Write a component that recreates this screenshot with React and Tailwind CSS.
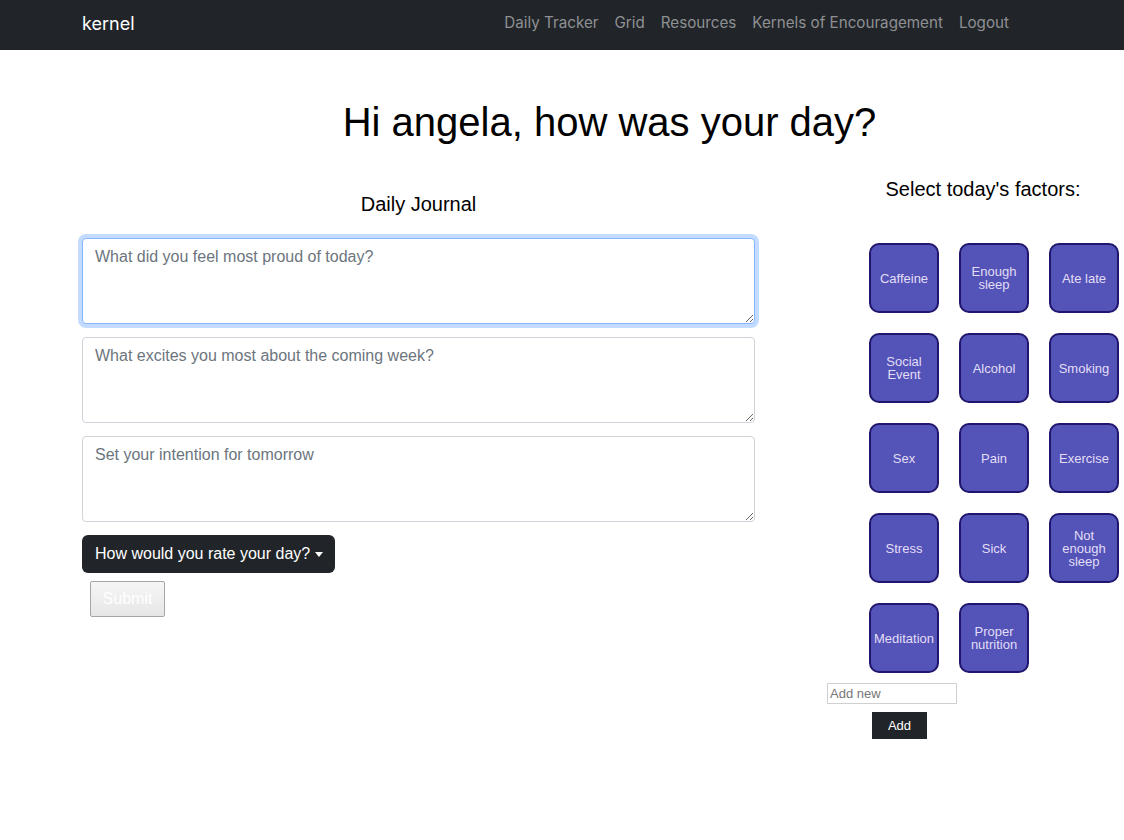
import React from "react";

const factors = [
  "Caffeine",
  "Enough sleep",
  "Ate late",
  "Social Event",
  "Alcohol",
  "Smoking",
  "Sex",
  "Pain",
  "Exercise",
  "Stress",
  "Sick",
  "Not enough sleep",
  "Meditation",
  "Proper nutrition",
];

const prompts = [
  "What did you feel most proud of today?",
  "What excites you most about the coming week?",
  "Set your intention for tomorrow",
];

export default function App() {
  return (
    <div className="min-h-[840px] bg-white font-['Liberation_Sans',Arial,sans-serif] text-black overflow-hidden">
      <nav className="h-[50px] bg-[#212529] flex items-center pb-[3px] pl-[82px] pr-[115px] font-['Inter',sans-serif]">
        <span className="text-[18px] text-white leading-none">kernel</span>
        <div className="ml-auto flex items-center gap-4 text-[15.2px] text-[#8f9093]">
          <span>Daily Tracker</span>
          <span>Grid</span>
          <span>Resources</span>
          <span>Kernels of Encouragement</span>
          <span>Logout</span>
        </div>
      </nav>

      <h1 className="mt-[48px] pl-[95px] text-center text-[40px] leading-[48px] font-normal">
        Hi angela, how was your day?
      </h1>

      <div className="flex pl-[82px]">
        <div className="w-[673px] shrink-0 pt-[46px]">
          <h2 className="text-center text-[20px] leading-[24px]">Daily Journal</h2>
          <div className="mt-[22px] flex flex-col gap-[13px]">
            {prompts.map((p, i) => (
              <textarea
                key={p}
                placeholder={p}
                className={
                  "w-full h-[86px] rounded-[4px] border px-3 py-[6px] text-[16px] leading-6 placeholder:text-[#6c757d] outline-none bg-white " +
                  (i === 0
                    ? "border-[#86b7fe] shadow-[0_0_0_4px_rgba(13,110,253,0.25)]"
                    : "border-[#ced4da]")
                }
              />
            ))}
            <div>
              <button className="h-[38px] w-[253px] rounded-[6px] bg-[#212529] text-white text-[16px] flex items-center pl-[13px]">
                How would you rate your day?
                <span className="ml-[5px] w-0 h-0 border-l-[4px] border-r-[4px] border-t-[5px] border-l-transparent border-r-transparent border-t-white" />
              </button>
            </div>
          </div>
          <button
            disabled
            className="mt-[8px] ml-[8px] w-[75px] h-[36px] rounded-[2px] border border-[#a6a6a6] bg-gradient-to-b from-[#f6f6f6] to-[#e6e6e6] text-white text-[16px]"
          >
            Submit
          </button>
        </div>

        <div className="ml-[72px] w-[312px] shrink-0 pt-[31px]">
          <h2 className="text-center text-[20px] leading-[24px]">Select today's factors:</h2>
          <div className="mt-[42px] pl-[42px] grid grid-cols-[70px_70px_70px] gap-5">
            {factors.map((f) => (
              <button
                key={f}
                className="w-[70px] h-[70px] rounded-[10px] border-2 border-[#20166e] bg-[#5453b8] text-[#e2def6] text-[13px] leading-[13px] flex items-center justify-center text-center px-1"
              >
                {f}
              </button>
            ))}
          </div>
          <input
            placeholder="Add new"
            className="mt-[10px] block w-[130px] h-[21px] border border-[#d0d0d0] px-[2px] text-[13px] placeholder:text-[#777] outline-none"
          />
          <button className="mt-[8px] ml-[45px] w-[55px] h-[27px] bg-[#212529] text-white text-[13px]">
            Add
          </button>
        </div>
      </div>
    </div>
  );
}
